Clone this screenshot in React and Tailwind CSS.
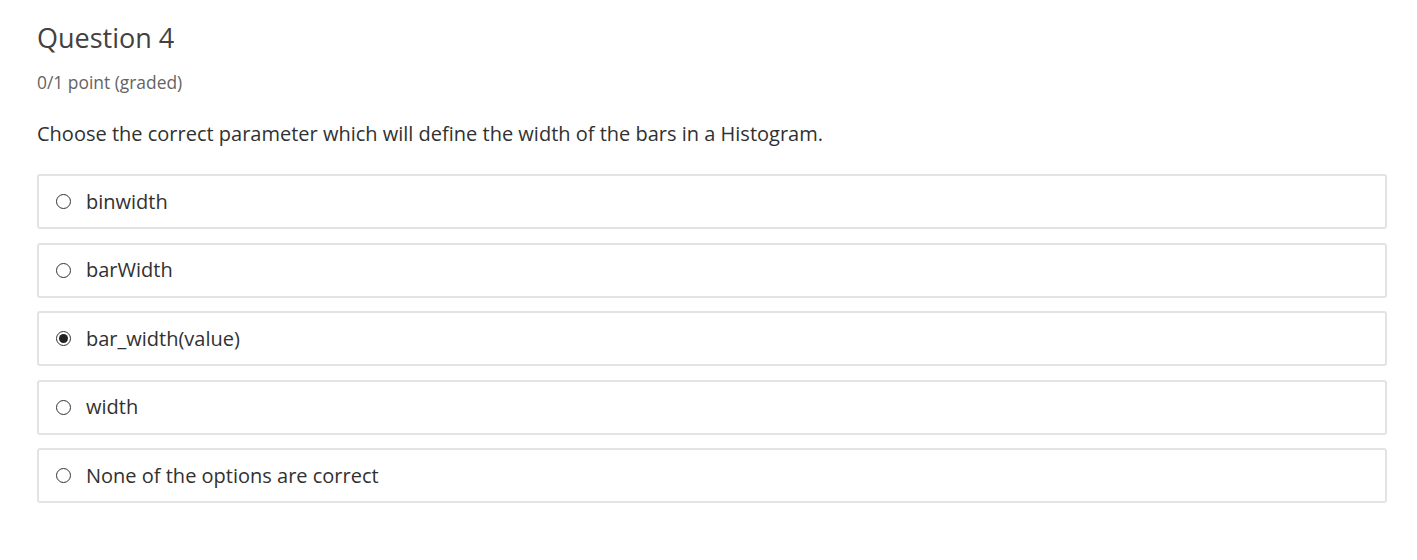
import React, { useState } from "react";

const options = [
  "binwidth",
  "barWidth",
  "bar_width(value)",
  "width",
  "None of the options are correct",
];

const Radio = ({ checked }) => (
  <span className="flex h-[15px] w-[15px] shrink-0 items-center justify-center rounded-full border border-[#333] bg-white">
    {checked && <span className="h-[9px] w-[9px] rounded-full bg-[#222]" />}
  </span>
);

const App = () => {
  const [selected, setSelected] = useState(2);

  return (
    <div className="min-h-screen bg-white pl-[37px] pr-[30px] pt-[22px] font-['Open_Sans',sans-serif] text-[#313131]">
      <h3 className="text-[27px] leading-[32px] text-[#414141]">Question 4</h3>
      <div className="mt-[18px] text-[17.4px] leading-[20px] text-[#646464]">0/1 point (graded)</div>
      <p className="mt-[29px] text-[20px] leading-[26px]">
        Choose the correct parameter which will define the width of the bars in a Histogram.
      </p>

      <div className="mt-[27px] flex flex-col gap-[13.5px]">
        {options.map((opt, i) => (
          <label
            key={opt}
            onClick={() => setSelected(i)}
            className="flex h-[55px] cursor-pointer items-center gap-[15px] rounded-[3px] border-2 border-[#e3e3e3] pl-[17px]"
          >
            <Radio checked={selected === i} />
            <span className="text-[20px] leading-[26px]">{opt}</span>
          </label>
        ))}
      </div>
    </div>
  );
};

export default App;
